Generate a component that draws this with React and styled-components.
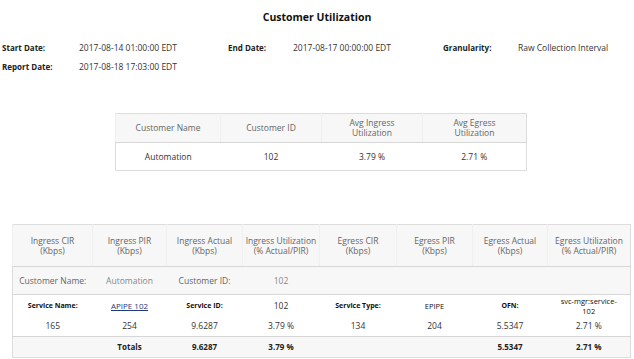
import React from 'react';
import styled, { createGlobalStyle } from 'styled-components';

const GlobalStyle = createGlobalStyle`
    body {
        margin: 0;
        background: #fff;
        font-family: "Open Sans", "Noto Sans", sans-serif;
        color: #333;
    }
`

const Page = styled.div`
    width: 634px;
`

const Title = styled.h1`
    margin: 0;
    padding-top: 10px;
    font-size: 10.5px;
    line-height: 14px;
    font-weight: bold;
    text-align: center;
    color: #111;
`

const InfoGrid = styled.div`
    display: grid;
    grid-template-columns: 77px 149px 65px 150px 75px 1fr;
    grid-auto-rows: 19px;
    margin-top: 14px;
    padding-left: 2px;
    line-height: 19px;
`

const InfoLabel = styled.div`
    font-size: 8px;
    font-weight: bold;
    color: #222;
`

const InfoValue = styled.div`
    font-size: 8.5px;
    color: #333;
`

const Table = styled.table`
    border-collapse: collapse;
    table-layout: fixed;
    width: ${p => p.$width}px;
    margin: ${p => p.$top}px 0 0 ${p => p.$left}px;
    border: 1px solid #ddd;
    font-size: 8.5px;
    line-height: 10px;
`

const HeadCell = styled.th`
    height: ${p => p.$h || 28}px;
    padding: 0 2px;
    background: #f7f7f7;
    border-bottom: 1px solid #d6d6d6;
    border-left: 1px solid #f0f0f0;
    color: #666;
    font-weight: normal;
    text-align: center;
    vertical-align: middle;
`

const Row = styled.tr`
    background: ${p => (p.$shade ? '#f7f7f7' : '#fff')};
    border-bottom: ${p => (p.$line ? '1px solid #d6d6d6' : 'none')};
`

const sizeOf = p => {
    if (p.$label) return '7px';
    if (p.$bold) return '8px';
    if (p.$small) return '7.5px';
    return 'inherit';
}

const Cell = styled.td`
    height: ${p => p.$h || 21}px;
    padding: 0 2px;
    text-align: center;
    vertical-align: middle;
    color: ${p => p.$color || '#333'};
    font-weight: ${p => (p.$bold || p.$label ? 'bold' : 'normal')};
    font-size: ${sizeOf};
`

const ServiceLink = styled.a`
    font-size: 8px;
    color: #1f3a78;
    text-decoration: underline;
`

const info = [
    ['Start Date:', '2017-08-14 01:00:00 EDT', 'End Date:', '2017-08-17 00:00:00 EDT', 'Granularity:', 'Raw Collection Interval'],
    ['Report Date:', '2017-08-18 17:03:00 EDT', '', '', '', ''],
]

const detailCols = [80, 74, 76, 77, 77, 76, 75, 83]

const detailHead = [
    ['Ingress CIR', '(Kbps)'],
    ['Ingress PIR', '(Kbps)'],
    ['Ingress Actual', '(Kbps)'],
    ['Ingress Utilization', '(% Actual/PIR)'],
    ['Egress CIR', '(Kbps)'],
    ['Egress PIR', '(Kbps)'],
    ['Egress Actual', '(Kbps)'],
    ['Egress Utilization', '(% Actual/PIR)'],
]

const App = () => {
    return (
        <Page>
            <GlobalStyle />
            <Title>Customer Utilization</Title>
            <InfoGrid>
                {info.map((row, i) =>
                    row.map((text, j) =>
                        j % 2 === 0
                            ? <InfoLabel key={`${i}-${j}`}>{text}</InfoLabel>
                            : <InfoValue key={`${i}-${j}`}>{text}</InfoValue>
                    )
                )}
            </InfoGrid>

            <Table $width={411} $left={115} $top={37}>
                <colgroup>
                    <col style={{ width: 105 }} />
                    <col style={{ width: 101 }} />
                    <col style={{ width: 101 }} />
                    <col style={{ width: 104 }} />
                </colgroup>
                <thead>
                    <tr>
                        <HeadCell>Customer Name</HeadCell>
                        <HeadCell>Customer ID</HeadCell>
                        <HeadCell>Avg Ingress<br />Utilization</HeadCell>
                        <HeadCell>Avg Egress<br />Utilization</HeadCell>
                    </tr>
                </thead>
                <tbody>
                    <Row>
                        <Cell $h={27}>Automation</Cell>
                        <Cell $h={27}>102</Cell>
                        <Cell $h={27}>3.79 %</Cell>
                        <Cell $h={27}>2.71 %</Cell>
                    </Row>
                </tbody>
            </Table>

            <Table $width={618} $left={12} $top={53}>
                <colgroup>
                    {detailCols.map((w, i) => <col key={i} style={{ width: w }} />)}
                </colgroup>
                <thead>
                    <tr>
                        {detailHead.map(([a, b]) => (
                            <HeadCell key={a} $h={41}>{a}<br />{b}</HeadCell>
                        ))}
                    </tr>
                </thead>
                <tbody>
                    <Row $shade $line>
                        <Cell $h={27} $color="#666">Customer Name:</Cell>
                        <Cell $h={27} $color="#888">Automation</Cell>
                        <Cell $h={27} $color="#666">Customer ID:</Cell>
                        <Cell $h={27} $color="#888">102</Cell>
                        <Cell $h={27} />
                        <Cell $h={27} />
                        <Cell $h={27} />
                        <Cell $h={27} />
                    </Row>
                    <Row>
                        <Cell $label $color="#111">Service Name:</Cell>
                        <Cell><ServiceLink href="#">APIPE 102</ServiceLink></Cell>
                        <Cell $label $color="#111">Service ID:</Cell>
                        <Cell>102</Cell>
                        <Cell $label $color="#111">Service Type:</Cell>
                        <Cell $small $color="#111">EPIPE</Cell>
                        <Cell $label $color="#111">OFN:</Cell>
                        <Cell $small $color="#111">svc-mgr:service-<br />102</Cell>
                    </Row>
                    <Row $line>
                        <Cell $h={20}>165</Cell>
                        <Cell $h={20}>254</Cell>
                        <Cell $h={20}>9.6287</Cell>
                        <Cell $h={20}>3.79 %</Cell>
                        <Cell $h={20}>134</Cell>
                        <Cell $h={20}>204</Cell>
                        <Cell $h={20}>5.5347</Cell>
                        <Cell $h={20}>2.71 %</Cell>
                    </Row>
                    <Row $shade>
                        <Cell $h={20} />
                        <Cell $h={20} $bold $color="#222">Totals</Cell>
                        <Cell $h={20} $bold $color="#222">9.6287</Cell>
                        <Cell $h={20} $bold $color="#222">3.79 %</Cell>
                        <Cell $h={20} />
                        <Cell $h={20} />
                        <Cell $h={20} $bold $color="#222">5.5347</Cell>
                        <Cell $h={20} $bold $color="#222">2.71 %</Cell>
                    </Row>
                </tbody>
            </Table>
        </Page>
    );
}

export default App
